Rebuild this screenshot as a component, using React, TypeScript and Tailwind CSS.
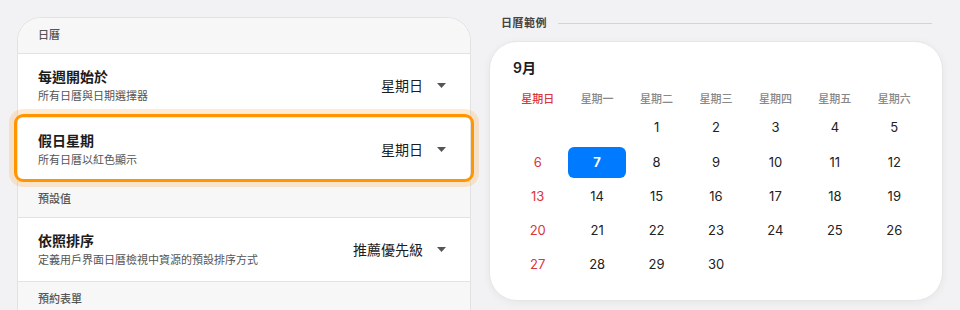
import React from "react";

const font = { fontFamily: "Inter, 'Noto Sans CJK TC', sans-serif" };

function Caret() {
  return (
    <svg width="9" height="5" viewBox="0 0 9 5" className="shrink-0">
      <path d="M0 0 L9 0 L4.5 5 Z" fill="#555" />
    </svg>
  );
}

function SectionHeader({ label }: { label: string }) {
  return (
    <div className="h-[36px] flex items-center px-5 bg-[#f7f7f7] border-b border-[#e2e2e2] text-[11px] font-medium text-[#555]">
      {label}
    </div>
  );
}

function Row({
  title,
  sub,
  value,
  highlight,
  last,
}: {
  title: string;
  sub: string;
  value: string;
  highlight?: boolean;
  last?: boolean;
}) {
  return (
    <div className={`relative h-[64px] bg-white ${last ? "border-b border-[#e2e2e2]" : "border-b border-[#e8e8e8]"}`}>
      {highlight && (
        <div className="absolute left-[-4px] right-[-4px] top-[-4px] bottom-[-1px] rounded-[9px] border-[3px] border-[#ff9500] shadow-[0_0_0_5px_rgba(255,166,60,0.22)] pointer-events-none z-10" />
      )}
      <div className="h-full flex items-center justify-between pl-5 pr-[24px]">
        <div className="flex flex-col">
          <div className="text-[14px] font-bold text-[#1c1c1c] leading-[19px]">{title}</div>
          <div className="text-[11px] text-[#555] leading-[16px] mt-[2px]">{sub}</div>
        </div>
        <div className="flex items-center gap-[14px]">
          <span className="text-[14px] text-[#1c1c1c]">{value}</span>
          <Caret />
        </div>
      </div>
    </div>
  );
}

const weekdays = ["星期日", "星期一", "星期二", "星期三", "星期四", "星期五", "星期六"];

export default function App() {
  const cells: (number | null)[] = [null, null];
  for (let i = 1; i <= 30; i++) cells.push(i);
  while (cells.length % 7) cells.push(null);

  return (
    <div className="w-[960px] h-[310px] overflow-hidden bg-[#f2f2f4] flex gap-[18px] px-[17px]" style={font}>
      <div className="w-[454px] mt-[17px] self-start bg-white rounded-t-[24px] border border-[#e2e2e2] overflow-visible">
        <div className="rounded-t-[24px] overflow-hidden">
          <SectionHeader label="日曆" />
        </div>
        <Row title="每週開始於" sub="所有日曆與日期選擇器" value="星期日" />
        <Row title="假日星期" sub="所有日曆以紅色顯示" value="星期日" highlight />
        <SectionHeader label="預設值" />
        <Row title="依照排序" sub="定義用戶界面日曆檢視中資源的預設排序方式" value="推薦優先級" last />
        <SectionHeader label="預約表單" />
        <div className="h-[40px] bg-white" />
      </div>

      <div className="w-[454px] flex flex-col">
        <div className="h-[41px] flex items-start pt-[15px] pl-3 pr-[11px] gap-[11px]">
          <span className="text-[11px] leading-4 font-semibold text-[#444] tracking-[0.5px]">日曆範例</span>
          <div className="flex-1 h-px bg-[#d4d4d4] mt-[8px]" />
        </div>
        <div className="bg-white rounded-[28px] border border-[#e6e6e6] shadow-[0_2px_8px_rgba(0,0,0,0.05)] px-[18px] pt-4 pb-[18px]">
          <div className="pl-[5px] text-[14px] font-semibold text-[#1c1c1c] leading-[20px] mb-[13px]">9月</div>
          <div className="grid grid-cols-7 h-4 items-center">
            {weekdays.map((w, i) => (
              <div
                key={w}
                className={`text-center text-[11px] font-medium leading-4 ${i === 0 ? "text-[#d9363e]" : "text-[#888]"}`}
              >
                {w}
              </div>
            ))}
          </div>
          <div className="grid grid-cols-7 mt-1">
            {cells.map((d, i) => (
              <div key={i} className="h-[34.25px] flex items-center justify-center">
                {d !== null &&
                  (d === 7 ? (
                    <div className="w-[58px] h-[31px] rounded-[6px] bg-[#007aff] text-white font-bold text-[13px] flex items-center justify-center">
                      7
                    </div>
                  ) : (
                    <span className={`text-[13px] ${i % 7 === 0 ? "text-[#d9363e]" : "text-[#222]"}`}>{d}</span>
                  ))}
              </div>
            ))}
          </div>
        </div>
      </div>
    </div>
  );
}
